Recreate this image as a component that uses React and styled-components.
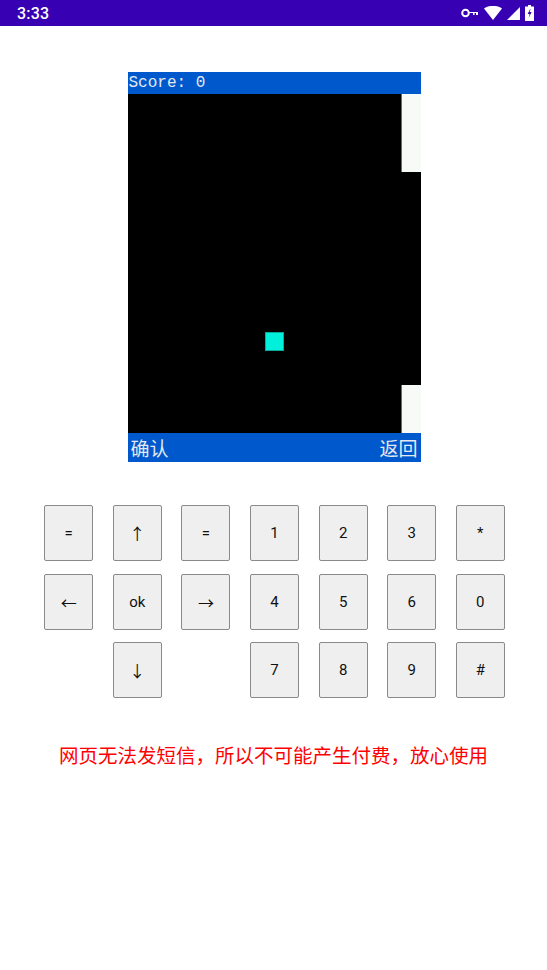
import React from 'react';
import styled, { createGlobalStyle } from 'styled-components';

const GlobalStyle = createGlobalStyle`
  html, body {
    margin: 0;
    padding: 0;
    background: #ffffff;
    font-family: Roboto, "Noto Sans", sans-serif;
  }
`;

const Page = styled.div`
  width: 547px;
  min-height: 970px;
  background: #fff;
  display: flex;
  flex-direction: column;
  align-items: center;
`;

const StatusBar = styled.div`
  width: 100%;
  height: 26px;
  background: #3700b3;
  color: #fff;
  display: flex;
  align-items: center;
  justify-content: space-between;
  padding: 0 13px 0 17px;
  box-sizing: border-box;
`;

const Clock = styled.span`
  font-family: Roboto, sans-serif;
  font-size: 16px;
  font-weight: 500;
  letter-spacing: 0.2px;
`;

const StatusIcons = styled.div`
  display: flex;
  align-items: center;
  gap: 5px;
`;

const Screen = styled.div`
  margin-top: 46px;
  margin-left: 1px;
  width: 293px;
  display: flex;
  flex-direction: column;
`;

const TopBar = styled.div`
  height: 22px;
  background: #0059cc;
  color: #e4e8f0;
  font-family: "Liberation Mono", "DejaVu Sans Mono", monospace;
  font-size: 16px;
  line-height: 22px;
  padding-left: 1px;
`;

const Field = styled.div`
  position: relative;
  height: 339px;
  background: #000;
  overflow: hidden;
`;

const Pipe = styled.div`
  position: absolute;
  right: 0;
  width: 19px;
  background: #f7fbf7;
  border-left: 1px solid #6a6a6a;
`;

const Bird = styled.div`
  position: absolute;
  width: 19px;
  height: 19px;
  background: #00f0dc;
  box-shadow: inset 0 0 0 1px #0aa89a;
`;

const SoftKeys = styled.div`
  height: 29px;
  background: #0059cc;
  color: #e4e8f0;
  font-family: "Noto Sans CJK SC", sans-serif;
  font-size: 19px;
  line-height: 29px;
  display: flex;
  justify-content: space-between;
  padding: 0 3px;
`;

const Keypad = styled.div`
  margin-top: 43px;
  margin-left: 2px;
  display: grid;
  grid-template-columns: repeat(7, 49px);
  grid-auto-rows: 56px;
  column-gap: 19.6px;
  row-gap: 12.5px;
`;

const Key = styled.button`
  box-sizing: border-box;
  grid-column: ${p => p.col};
  background: #efefef;
  border: 1px solid #8a8a8a;
  border-radius: 2px;
  color: #111;
  font-family: ${p => (p.arrow ? '"Noto Sans CJK SC", sans-serif' : 'Roboto, "DejaVu Sans", sans-serif')};
  font-size: ${p => (p.arrow ? '16px' : '15px')};
  padding: 0;
  display: flex;
  align-items: center;
  justify-content: center;
`;

const Notice = styled.p`
  margin: 45px 0 0;
  color: #ff0000;
  font-family: "Noto Sans CJK SC", sans-serif;
  font-size: 19.5px;
  line-height: 24px;
`;

const keys = [
  ['=', 1], ['↑', 2, true], ['=', 3], ['1', 4], ['2', 5], ['3', 6], ['*', 7],
  ['←', 1, true], ['ok', 2], ['→', 3, true], ['4', 4], ['5', 5], ['6', 6], ['0', 7],
  ['↓', 2, true], ['7', 4], ['8', 5], ['9', 6], ['#', 7],
];

function StatusGlyphs() {
  return (
    <StatusIcons>
      <svg width="18" height="10" viewBox="0 0 18 10">
        <circle cx="4.5" cy="5" r="3.3" fill="none" stroke="#fff" strokeWidth="2" />
        <path d="M8 4h9v3h-2v-2h-1.5v2h-1.5v-2H8z" fill="#fff" />
      </svg>
      <svg width="18" height="14" viewBox="0 0 18 14">
        <path d="M0 2.5C5 -1 13 -1 18 2.5L9 14z" fill="#fff" />
      </svg>
      <svg width="13" height="13" viewBox="0 0 13 13">
        <path d="M13 0v13H0z" fill="#fff" />
      </svg>
      <svg width="9" height="16" viewBox="0 0 9 16">
        <path d="M3 0h3v1.5h3V16H0V1.5h3z" fill="#fff" />
        <path d="M5.2 4L2.6 9h2l-1 4 3-6h-2l1-3z" fill="#3700b3" />
      </svg>
    </StatusIcons>
  );
}

export default function App() {
  return (
    <Page>
      <GlobalStyle />
      <StatusBar>
        <Clock>3:33</Clock>
        <StatusGlyphs />
      </StatusBar>

      <Screen>
        <TopBar>Score: 0</TopBar>
        <Field>
          <Pipe style={{ top: 0, height: 78 }} />
          <Pipe style={{ bottom: 0, height: 48 }} />
          <Bird style={{ left: 137, top: 238 }} />
        </Field>
        <SoftKeys>
          <span>确认</span>
          <span>返回</span>
        </SoftKeys>
      </Screen>

      <Keypad>
        {keys.map(([label, col, arrow], i) => (
          <Key key={i} col={col} arrow={arrow}>{label}</Key>
        ))}
      </Keypad>

      <Notice>网页无法发短信，所以不可能产生付费，放心使用</Notice>
    </Page>
  );
}
